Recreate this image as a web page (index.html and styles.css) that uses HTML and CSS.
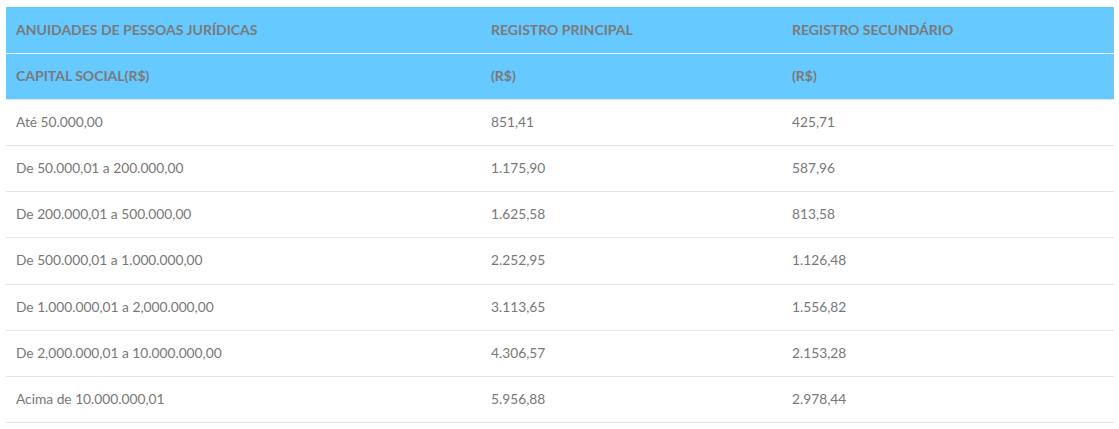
FILE: index.html
```html
<!DOCTYPE html>
<html lang="pt">
<head>
<meta charset="utf-8">
<link rel="stylesheet" href="styles.css">
</head>
<body>
<table class="fees">
  <colgroup>
    <col class="c1"><col class="c2"><col class="c3">
  </colgroup>
  <thead>
    <tr class="top"><th>ANUIDADES DE PESSOAS JURÍDICAS</th><th>REGISTRO PRINCIPAL</th><th>REGISTRO SECUNDÁRIO</th></tr>
    <tr class="sub"><th>CAPITAL SOCIAL(R$)</th><th>(R$)</th><th>(R$)</th></tr>
  </thead>
  <tbody>
    <tr><td>Até 50.000,00</td><td>851,41</td><td>425,71</td></tr>
    <tr><td>De 50.000,01 a 200.000,00</td><td>1.175,90</td><td>587,96</td></tr>
    <tr><td>De 200.000,01 a 500.000,00</td><td>1.625,58</td><td>813,58</td></tr>
    <tr><td>De 500.000,01 a 1.000.000,00</td><td>2.252,95</td><td>1.126,48</td></tr>
    <tr><td>De 1.000.000,01 a 2,000.000,00</td><td>3.113,65</td><td>1.556,82</td></tr>
    <tr><td>De 2,000.000,01 a 10.000.000,00</td><td>4.306,57</td><td>2.153,28</td></tr>
    <tr><td>Acima de 10.000.000,01</td><td>5.956,88</td><td>2.978,44</td></tr>
  </tbody>
</table>
</body>
</html>
```
FILE: styles.css
```css
html, body {
  margin: 0;
  padding: 0;
  background: #fff;
}
body {
  padding: 7px 5px 0 6px;
  font-family: Lato, "Open Sans", sans-serif;
  font-size: 14px;
  color: #777;
}
.fees {
  width: 1108px;
  border-collapse: collapse;
  table-layout: fixed;
}
.c1 { width: 475px; }
.c2 { width: 301px; }
.c3 { width: 332px; }
.fees th {
  background: #66c9ff;
  color: #7a7a7a;
  font-weight: bold;
  text-align: left;
  line-height: 20px;
  padding: 12px 10px 13px;
  vertical-align: middle;
}
.fees .top th {
  padding-top: 13px;
  border-bottom: 1px solid #e8f4fb;
}
.fees .sub th {
  border-bottom: 1px solid #e6e6e6;
}
.fees td {
  font-size: 13.75px;
  line-height: 20px;
  padding: 12px 10px 13.17px;
  border-bottom: 1px solid #e6e6e6;
  vertical-align: middle;
}
```
